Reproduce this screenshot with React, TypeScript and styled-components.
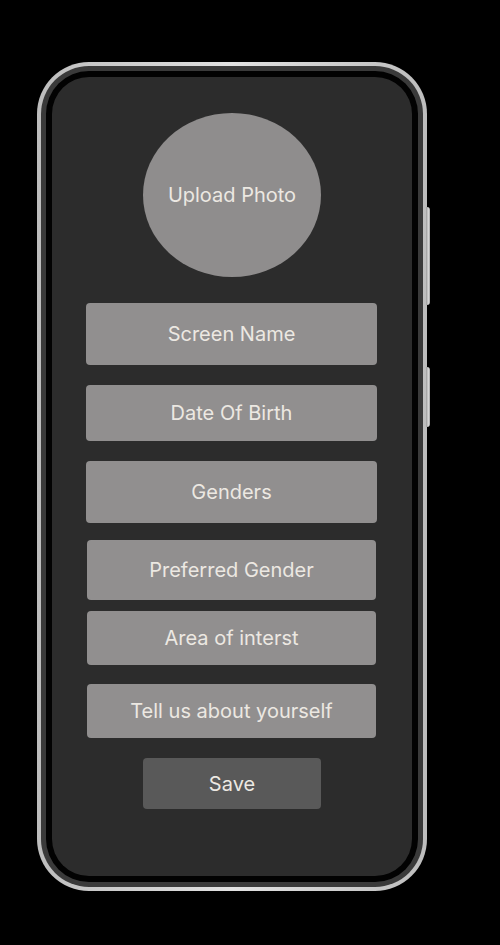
import React from "react";
import styled, { createGlobalStyle } from "styled-components";

const Global = createGlobalStyle`
  html, body { margin: 0; padding: 0; background: #000; }
  body { font-family: Inter, "Noto Sans", sans-serif; }
`;

const Page = styled.div`
  width: 500px;
  height: 945px;
  background: #000;
  padding: 62px 0 0 37px;
  box-sizing: border-box;
`;

const Phone = styled.div`
  position: relative;
  width: 390px;
  height: 829px;
  box-sizing: border-box;
  padding: 4px;
  border-radius: 52px;
  background: linear-gradient(90deg, #bdbdbd 0%, #e2e2e2 50%, #bdbdbd 100%);
`;

const Band = styled.div`
  height: 100%;
  box-sizing: border-box;
  padding: 5px;
  border-radius: 48px;
  background: #3a3a3a;
`;

const Bezel = styled.div`
  height: 100%;
  box-sizing: border-box;
  padding: 6px;
  border-radius: 43px;
  background: #020202;
`;

const Screen = styled.div`
  height: 100%;
  box-sizing: border-box;
  border-radius: 37px;
  background: #2c2c2c;
  display: flex;
  flex-direction: column;
  align-items: center;
  padding-top: 36px;
`;

const SideButton = styled.div<{ $top: number; $h: number }>`
  position: absolute;
  right: -3px;
  top: ${(p) => p.$top}px;
  width: 4px;
  height: ${(p) => p.$h}px;
  border-radius: 0 3px 3px 0;
  background: linear-gradient(90deg, #9a9a9a, #d8d8d8 60%, #a0a0a0);
`;

const Avatar = styled.div`
  width: 178px;
  height: 164px;
  border-radius: 50%;
  background: #8f8d8d;
  color: #ece8e2;
  font-size: 20px;
  display: flex;
  align-items: center;
  justify-content: center;
  margin-bottom: 26px;
`;

const Field = styled.div<{ $h: number; $gap: number; $w?: number }>`
  width: ${(p) => p.$w ?? 291}px;
  height: ${(p) => p.$h}px;
  margin-top: ${(p) => p.$gap}px;
  margin-right: 1px;
  border-radius: 4px;
  background: #918f8f;
  color: #ece8e2;
  font-size: 20px;
  display: flex;
  align-items: center;
  justify-content: center;
`;

const SaveButton = styled.div`
  width: 178px;
  height: 51px;
  margin-top: 20px;
  border-radius: 4px;
  background: #595959;
  color: #ece8e2;
  font-size: 20px;
  display: flex;
  align-items: center;
  justify-content: center;
`;

const fields = [
  { label: "Screen Name", h: 62, gap: 0, w: 291 },
  { label: "Date Of Birth", h: 56, gap: 20, w: 291 },
  { label: "Genders", h: 62, gap: 20, w: 291 },
  { label: "Preferred Gender", h: 60, gap: 17, w: 289 },
  { label: "Area of interst", h: 54, gap: 11, w: 289 },
  { label: "Tell us about yourself", h: 54, gap: 19, w: 289 },
];

export default function App() {
  return (
    <>
      <Global />
      <Page>
        <Phone>
          <SideButton $top={145} $h={98} />
          <SideButton $top={305} $h={60} />
          <Band>
            <Bezel>
              <Screen>
                <Avatar>Upload Photo</Avatar>
                {fields.map((f) => (
                  <Field key={f.label} $h={f.h} $gap={f.gap} $w={f.w}>
                    {f.label}
                  </Field>
                ))}
                <SaveButton>Save</SaveButton>
              </Screen>
            </Bezel>
          </Band>
        </Phone>
      </Page>
    </>
  );
}
